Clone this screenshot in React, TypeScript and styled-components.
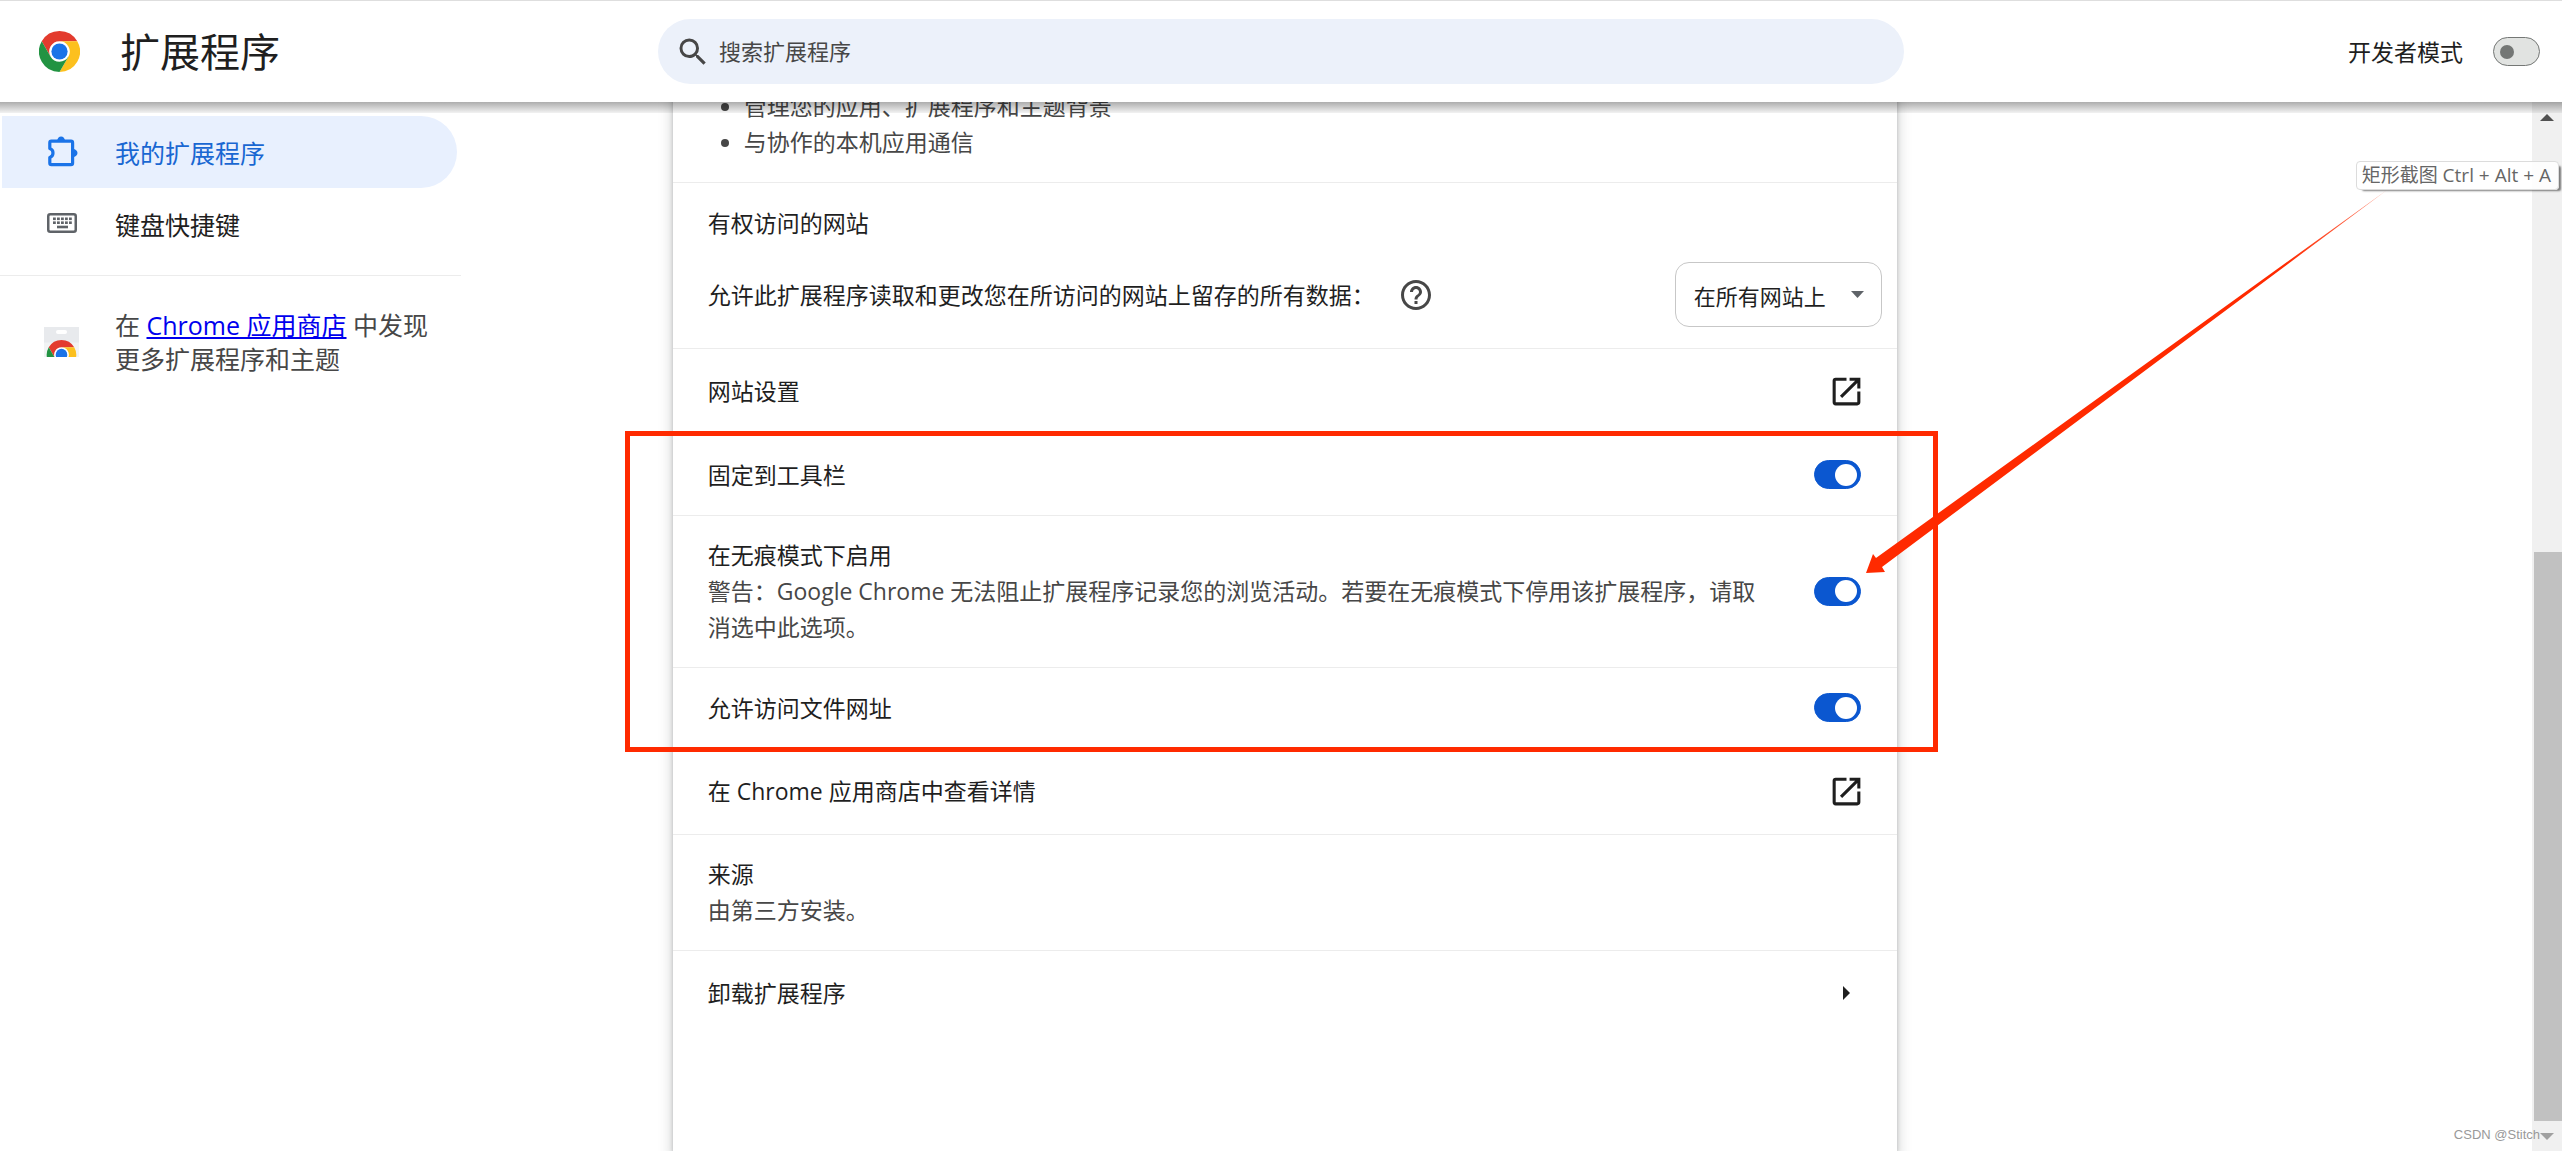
import React, { useState } from 'react';
import styled, { createGlobalStyle } from 'styled-components';
import { MdHelpOutline, MdOpenInNew, MdSearch } from 'react-icons/md';

const GlobalStyle = createGlobalStyle`
  * { box-sizing: border-box; }
  body {
    margin: 0;
    background: #fff;
    color: #1f1f1f;
    font-family: "Open Sans", "Noto Sans CJK SC", sans-serif;
    font-size: 23px;
    line-height: 36px;
  }
  button, input, select { font: inherit; color: inherit; }
`;

const Page = styled.div`
  position: relative;
  display: flex;
  flex-direction: column;
  height: 100vh;
  overflow: hidden;
`;

const Header = styled.header`
  position: relative;
  z-index: 3;
  display: grid;
  grid-template-columns: minmax(0, 1fr) minmax(0, 1246px) minmax(0, 1fr);
  align-items: center;
  height: 102px;
  flex: none;
  padding: 0 22px;
  background: #fff;
  border-top: 1px solid #dedede;

  &::after {
    content: "";
    position: absolute;
    top: 100%;
    left: 0;
    right: 0;
    height: 11px;
    background: linear-gradient(rgba(0, 0, 0, 0.32), rgba(0, 0, 0, 0.05));
  }
`;

const Brand = styled.div`
  display: flex;
  align-items: center;
  gap: 40px;
  padding-left: 17px;
`;

const Title = styled.h1`
  margin: 0;
  font-size: 40px;
  font-weight: 400;
  line-height: 56px;
`;

const SearchField = styled.label`
  display: flex;
  align-items: center;
  gap: 8px;
  height: 65px;
  padding: 0 24px 0 17px;
  border-radius: 33px;
  background: #ecf1fa;
  color: #474747;
`;

const SearchInput = styled.input`
  flex: 1;
  min-width: 0;
  padding: 0 0 2px;
  border: 0;
  outline: 0;
  background: none;
  font-size: 22px;
  &::placeholder { color: #474747; opacity: 1; }
`;

const DevMode = styled.label`
  display: flex;
  align-items: center;
  justify-content: flex-end;
  gap: 30px;
`;

const Switch = styled.input.attrs({ type: 'checkbox' })`
  appearance: none;
  flex: none;
  display: flex;
  align-items: center;
  width: 47px;
  height: 29px;
  margin: 0;
  padding: 0 6px;
  border: 1px solid #747775;
  border-radius: 15px;
  background: #e1e3e1;

  &::before {
    content: "";
    width: 14px;
    height: 14px;
    border-radius: 50%;
    background: #747775;
  }
  &:checked {
    justify-content: flex-end;
    padding: 0 3px;
    border-color: #0b57d0;
    background: #0b57d0;
  }
  &:checked::before {
    width: 22px;
    height: 22px;
    background: #fff;
  }
`;

const Body = styled.div`
  display: flex;
  flex: 1;
  min-height: 0;
`;

const Sidebar = styled.nav`
  flex: none;
  width: 461px;
  padding-top: 14px;
  font-size: 25px;
  line-height: 34px;
`;

const NavItem = styled.a<{ $active?: boolean }>`
  display: flex;
  align-items: center;
  gap: 37px;
  height: 72px;
  margin: 0 4px 0 2px;
  padding: 2px 0 0 43px;
  border-radius: 0 36px 36px 0;
  background: ${(p) => (p.$active ? '#e8f0fe' : 'transparent')};
  color: ${(p) => (p.$active ? '#1967d2' : '#1f1f1f')};
  text-decoration: none;
`;

const IconSlot = styled.span`
  display: flex;
  flex: none;
  justify-content: center;
  width: 33px;
  padding-bottom: 4px;
`;

const StorePromo = styled.div`
  display: flex;
  align-items: center;
  gap: 36px;
  margin-top: 15px;
  padding: 32px 16px 0 44px;
  border-top: 1px solid #ececec;
  color: #474747;
`;

const StoreLink = styled.a`
  color: #00e;
`;

const StoreSvg = styled.svg`
  flex: none;
`;

const Content = styled.main`
  display: grid;
  flex: 1;
  min-width: 0;
  grid-template-columns: minmax(0, 1fr) minmax(0, 1224px) minmax(0, 3fr);
`;

const Card = styled.article`
  grid-column: 2;
  margin-top: -14px;
  background: #fff;
  box-shadow: 0 2px 4px rgba(60, 64, 67, 0.3), 0 4px 11px 4px rgba(60, 64, 67, 0.15);
`;

const Permissions = styled.ul`
  margin: 0;
  padding: 0 0 22px 71px;
  color: #474747;
`;

const Section = styled.section`
  padding: 22px 15px 21px 35px;
  border-top: 1px solid #ececec;
`;

const SectionTitle = styled.h2`
  margin: 0 0 21px;
  font-size: 23px;
  font-weight: 400;
  line-height: 36px;
`;

const AccessRow = styled.div`
  display: flex;
  align-items: center;
`;

const HelpButton = styled.button`
  display: flex;
  margin: 0 auto 0 23px;
  padding: 0;
  border: 0;
  background: none;
  color: #474747;
`;

const SelectBox = styled.div`
  display: grid;
  align-items: center;
  width: 207px;
  > * { grid-area: 1 / 1; }
  svg { justify-self: end; margin-right: 18px; pointer-events: none; }
`;

const Select = styled.select`
  appearance: none;
  width: 100%;
  height: 65px;
  padding: 2px 40px 0 18px;
  border: 1px solid #c7c7c7;
  border-radius: 14px;
  background: #fff;
  font-size: 22px;
`;

const Row = styled.div`
  display: flex;
  align-items: center;
  justify-content: space-between;
  gap: 46px;
  width: 100%;
  min-height: 81px;
  padding: 21px 36px 22px 35px;
  border: 0;
  border-top: 1px solid #ececec;
  background: none;
  color: #1f1f1f;
  text-align: left;
  text-decoration: none;
`;

const ActionRow = styled(Row)`
  min-height: 86px;
  padding-right: 32px;
`;

const UninstallRow = styled(Row)`
  min-height: 86px;
  padding-right: 47px;
`;

const Note = styled.span`
  display: block;
  color: #474747;
`;

const Highlight = styled.div`
  position: relative;
  &::after {
    content: "";
    position: absolute;
    inset: -3px -41px -4px -48px;
    border: 5px solid #ff2a00;
    pointer-events: none;
  }
`;

const Arrow = styled.svg`
  position: absolute;
  z-index: 1;
  left: calc(100% - 31px);
  top: -244px;
  pointer-events: none;
`;

const Scrollbar = styled.div`
  display: flex;
  flex: none;
  flex-direction: column;
  width: 30px;
  background: #f0f0f0;
`;

const ScrollButton = styled.button`
  display: flex;
  align-items: center;
  justify-content: center;
  height: 30px;
  padding: 0;
  border: 0;
  background: none;
`;

const ScrollTrack = styled.div`
  display: flex;
  flex: 1;
  flex-direction: column;
  padding-left: 2px;
  &::before { content: ""; flex: 420; }
`;

const ScrollThumb = styled.div`
  flex: 570;
  background: #c1c1c1;
`;

const Tooltip = styled.div`
  position: absolute;
  z-index: 4;
  top: 161px;
  right: 3px;
  padding: 0 7px 0 5px;
  border: 1px solid #dcdcdc;
  border-radius: 4px;
  background: rgba(255, 255, 255, 0.85);
  box-shadow: 4px 3px 2px -2px rgba(0, 0, 0, 0.5);
  color: #666;
  font-size: 19px;
  line-height: 27px;
`;

const Watermark = styled.div`
  position: absolute;
  right: 22px;
  bottom: 6px;
  color: #999;
  font-family: "Liberation Sans", sans-serif;
  font-size: 13px;
  line-height: 20px;
`;

const ChromeShapes = () => (
  <>
    <circle cx="24" cy="24" r="12" fill="#fff" />
    <path fill="#e33b2e" d="M24,12H44.7812a23.9939,23.9939,0,0,0-41.5639.0029L13.6079,30l.0093-.0024A11.9852,11.9852,0,0,1,24,12Z" />
    <path fill="#fcc01e" d="M34.3913,30.0029,24.0007,48A23.994,23.994,0,0,0,44.78,12.0031H23.9989l-.0025.0093A11.985,11.985,0,0,1,34.3913,30.0029Z" />
    <path fill="#229342" d="M13.6086,30.0031,3.218,12.006A23.994,23.994,0,0,0,24.0025,48L34.3931,30.0029l-.0067-.0068a11.9852,11.9852,0,0,1-20.7778.007Z" />
    <circle cx="24" cy="24" r="9.5" fill="#1a73e8" />
  </>
);

const PuzzleIcon = () => (
  <svg width="33" height="31" viewBox="-2 0 33 31" aria-hidden="true">
    <path
      fill="none"
      stroke="#1a73e8"
      strokeWidth="3.2"
      strokeLinejoin="round"
      d="M4.4 5.2H24a1.6 1.6 0 0 1 1.6 1.6V27a1.6 1.6 0 0 1-1.6 1.6H4.4A1.6 1.6 0 0 1 2.8 27v-5.6C5.2 20.6 6 19 6 17s-.8-3.6-3.2-4.4V6.8A1.6 1.6 0 0 1 4.4 5.2Z"
    />
    <path fill="#1a73e8" d="M10.2 5a3.9 4.5 0 0 1 7.8 0ZM26 13a4.5 4 0 0 1 0 8Z" />
  </svg>
);

const KeyboardIcon = () => (
  <svg width="30" height="20" viewBox="0 0 30 20" aria-hidden="true">
    <rect x="1.25" y="1.25" width="27.5" height="17.5" rx="2" fill="none" stroke="#5f6368" strokeWidth="2.5" />
    <g fill="#5f6368">
      {[6, 10, 14, 18, 22].map((x) => (
        <React.Fragment key={x}>
          <rect x={x} y="4.5" width="2.8" height="2.6" />
          <rect x={x} y="8.4" width="2.8" height="2.6" />
        </React.Fragment>
      ))}
      <rect x="10" y="12.7" width="11" height="2.6" />
    </g>
  </svg>
);

const StoreIcon = () => (
  <StoreSvg width="35" height="30" viewBox="0 0 35 30" aria-hidden="true">
    <rect width="35" height="30" fill="#f1f3f4" />
    <rect width="35" height="15.5" fill="#e8eaed" />
    <rect x="12" y="3" width="11" height="4" rx="2" fill="#fff" />
    <g transform="translate(2.8 13) scale(.612)">
      <ChromeShapes />
    </g>
  </StoreSvg>
);

export default function App() {
  const [dev, setDev] = useState(false);
  const [pinned, setPinned] = useState(true);
  const [incognito, setIncognito] = useState(true);
  const [files, setFiles] = useState(true);

  return (
    <>
      <GlobalStyle />
      <Page>
        <Header>
          <Brand>
            <svg width="41" height="41" viewBox="0 0 48 48" aria-hidden="true"><ChromeShapes /></svg>
            <Title>扩展程序</Title>
          </Brand>
          <SearchField>
            <MdSearch size={36} aria-hidden="true" />
            <SearchInput type="text" placeholder="搜索扩展程序" aria-label="搜索扩展程序" />
          </SearchField>
          <DevMode>
            开发者模式
            <Switch checked={dev} onChange={() => setDev(!dev)} />
          </DevMode>
        </Header>

        <Body>
          <Sidebar>
            <NavItem href="#extensions" $active>
              <IconSlot><PuzzleIcon /></IconSlot>
              我的扩展程序
            </NavItem>
            <NavItem href="#shortcuts">
              <IconSlot><KeyboardIcon /></IconSlot>
              键盘快捷键
            </NavItem>
            <StorePromo>
              <StoreIcon />
              <span>在 <StoreLink href="#store">Chrome 应用商店</StoreLink> 中发现更多扩展程序和主题</span>
            </StorePromo>
          </Sidebar>

          <Content>
            <Card>
              <Permissions>
                <li>管理您的应用、扩展程序和主题背景</li>
                <li>与协作的本机应用通信</li>
              </Permissions>
              <Section>
                <SectionTitle>有权访问的网站</SectionTitle>
                <AccessRow>
                  <label htmlFor="site-access">允许此扩展程序读取和更改您在所访问的网站上留存的所有数据：</label>
                  <HelpButton aria-label="帮助"><MdHelpOutline size={36} /></HelpButton>
                  <SelectBox>
                    <Select id="site-access"><option>在所有网站上</option></Select>
                    <svg width="13" height="7" viewBox="0 0 13 7" aria-hidden="true"><path fill="#5f6368" d="M0 0h13L6.5 7Z" /></svg>
                  </SelectBox>
                </AccessRow>
              </Section>
              <ActionRow as="a" href="#site-settings">
                网站设置
                <MdOpenInNew size={37} aria-hidden="true" />
              </ActionRow>
              <Highlight>
                <Row as="label">
                  固定到工具栏
                  <Switch checked={pinned} onChange={() => setPinned(!pinned)} />
                </Row>
                <Row as="label">
                  <span>
                    在无痕模式下启用
                    <Note>警告：Google Chrome 无法阻止扩展程序记录您的浏览活动。若要在无痕模式下停用该扩展程序，请取消选中此选项。</Note>
                  </span>
                  <Switch checked={incognito} onChange={() => setIncognito(!incognito)} />
                </Row>
                <Row as="label">
                  允许访问文件网址
                  <Switch checked={files} onChange={() => setFiles(!files)} />
                </Row>
                <Arrow width="522" height="384" viewBox="0 0 522 384" aria-hidden="true">
                  <defs>
                    <linearGradient id="tail" x1="0" y1="1" x2="1" y2="0">
                      <stop offset="0.8" stopColor="#ff2a00" />
                      <stop offset="1" stopColor="#ff2a00" stopOpacity="0.6" />
                    </linearGradient>
                  </defs>
                  <path fill="url(#tail)" d="M521 0 10 368 7 364 0 383l19-1-3-5Z" />
                </Arrow>
              </Highlight>
              <ActionRow as="a" href="#store-details">
                在 Chrome 应用商店中查看详情
                <MdOpenInNew size={37} aria-hidden="true" />
              </ActionRow>
              <Row>
                <span>
                  来源
                  <Note>由第三方安装。</Note>
                </span>
              </Row>
              <UninstallRow as="button">
                卸载扩展程序
                <svg width="7" height="14" viewBox="0 0 7 14" aria-hidden="true"><path fill="#1f1f1f" d="M0 0v14l7-7Z" /></svg>
              </UninstallRow>
            </Card>
          </Content>

          <Scrollbar>
            <ScrollButton aria-label="向上滚动">
              <svg width="14" height="7" viewBox="0 0 14 7"><path fill="#505050" d="M0 7h14L7 0Z" /></svg>
            </ScrollButton>
            <ScrollTrack><ScrollThumb /></ScrollTrack>
            <ScrollButton aria-label="向下滚动">
              <svg width="14" height="7" viewBox="0 0 14 7"><path fill="#a0a0a0" d="M0 0h14L7 7Z" /></svg>
            </ScrollButton>
          </Scrollbar>
        </Body>

        <Tooltip role="tooltip">矩形截图 Ctrl + Alt + A</Tooltip>
        <Watermark>CSDN @Stitch</Watermark>
      </Page>
    </>
  );
}
